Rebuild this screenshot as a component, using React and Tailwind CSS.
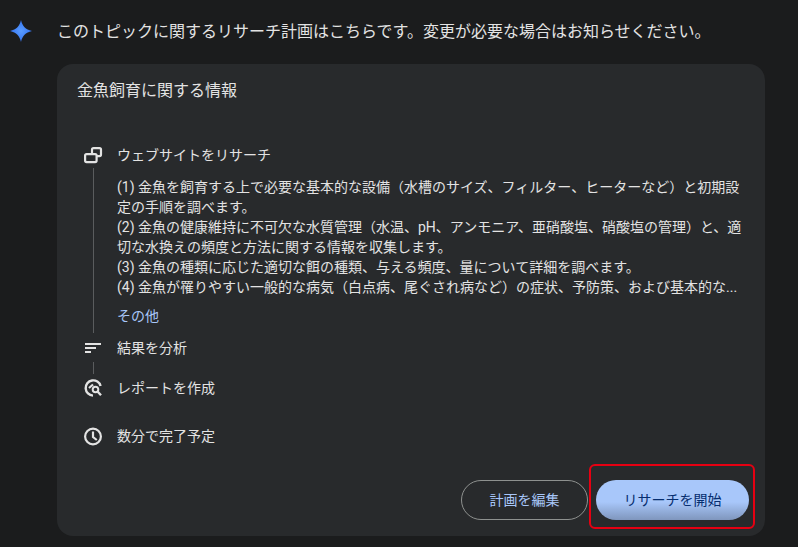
const font = { fontFamily: '"Roboto", "Noto Sans CJK JP", sans-serif' };

function Spark() {
  return (
    <svg width="24" height="24" viewBox="0 1 24 24" className="shrink-0">
      <defs>
        <radialGradient id="sp" cx="0.5" cy="0.5" r="0.55">
          <stop offset="0" stopColor="#5a9cff" />
          <stop offset="1" stopColor="#2f6ff0" />
        </radialGradient>
      </defs>
      <path d="M12 1C13.4 7.2 16.4 10.4 23 12C16.4 13.6 13.4 16.8 12 23C10.6 16.8 7.6 13.6 1 12C7.6 10.4 10.6 7.2 12 1Z" fill="url(#sp)" />
    </svg>
  );
}

function IconWeb() {
  return (
    <svg width="20" height="20" viewBox="0 0 20 20" fill="none" stroke="#e3e3e3" strokeWidth="2.2">
      <rect x="8" y="3.1" width="9" height="8" rx="1.5" />
      <rect x="1.1" y="9.1" width="11.5" height="8" rx="1.5" fill="#282a2c" />
    </svg>
  );
}

function IconAnalyze() {
  return (
    <svg width="20" height="20" viewBox="0 0 20 20" fill="#e3e3e3">
      <rect x="1" y="5" width="16" height="2" />
      <rect x="1" y="9" width="11" height="2" />
      <rect x="1" y="13" width="6" height="2" />
    </svg>
  );
}

function IconReport() {
  return (
    <svg width="20" height="20" viewBox="0 0 20 20" fill="none">
      <path d="M9 17.6A7.6 7.6 0 1 1 16.6 8" stroke="#e3e3e3" strokeWidth="2.4" />
      <path d="M5 10L9 6.5" stroke="#e3e3e3" strokeWidth="2.2" />
      <circle cx="11.5" cy="11.5" r="2.8" stroke="#e3e3e3" strokeWidth="2" />
      <path d="M13.5 13.5L17 17.2" stroke="#e3e3e3" strokeWidth="2.4" />
    </svg>
  );
}

function IconClock() {
  return (
    <svg width="20" height="20" viewBox="0 0 20 20" fill="none" stroke="#e3e3e3" strokeWidth="2.2">
      <circle cx="9" cy="10.5" r="7.9" />
      <path d="M9 5.5V11L12.8 14" />
    </svg>
  );
}

function Step({ icon, label }) {
  return (
    <div className="flex items-center h-5">
      <div className="w-[33px] flex justify-start shrink-0">{icon}</div>
      <span className="text-[14px] leading-5 text-[#e3e3e3]">{label}</span>
    </div>
  );
}

export default function App() {
  return (
    <div style={font} className="w-[798px] h-[547px] overflow-hidden bg-[#1b1c1d] text-[#e3e3e3] pl-[9px] pr-[33px] pt-[20px]">
      <div className="flex items-center h-6 gap-[24px]">
        <Spark />
        <p className="text-[16px] leading-6 text-[#e3e3e3] whitespace-nowrap">このトピックに関するリサーチ計画はこちらです。変更が必要な場合はお知らせください。</p>
      </div>

      <div className="ml-[48px] mt-[20px] h-[472px] rounded-[16px] bg-[#282a2c] flex flex-col pt-[15px] pl-[20px] pr-[16px]">
        <h2 className="text-[16px] leading-6 font-normal text-[#e3e3e3]">金魚飼育に関する情報</h2>

        <div className="mt-[42px] pl-[7px]">
          <Step icon={<IconWeb />} label="ウェブサイトをリサーチ" />
          <div className="flex mt-[3px]">
            <div className="w-[33px] shrink-0 pl-[9px]">
              <div className="w-px h-[165px] bg-[#5a5c5e]" />
            </div>
            <div className="pt-[9px] text-[14px] leading-5 text-[#e3e3e3] w-[630px]">
              <p>(1) 金魚を飼育する上で必要な基本的な設備（水槽のサイズ、フィルター、ヒーターなど）と初期設定の手順を調べます。</p>
              <p>(2) 金魚の健康維持に不可欠な水質管理（水温、pH、アンモニア、亜硝酸塩、硝酸塩の管理）と、適切な水換えの頻度と方法に関する情報を収集します。</p>
              <p>(3) 金魚の種類に応じた適切な餌の種類、与える頻度、量について詳細を調べます。</p>
              <p className="whitespace-nowrap">(4) 金魚が罹りやすい一般的な病気（白点病、尾ぐされ病など）の症状、予防策、および基本的な...</p>
              <p className="mt-[9px] text-[#a8c7fa]">その他</p>
            </div>
          </div>
          <div className="mt-[5px]">
            <Step icon={<IconAnalyze />} label="結果を分析" />
          </div>
          <div className="pl-[9px] mt-[4px]">
            <div className="w-px h-[12px] bg-[#5a5c5e]" />
          </div>
          <div className="mt-[4px]">
            <Step icon={<IconReport />} label="レポートを作成" />
          </div>
          <div className="mt-[28px]">
            <Step icon={<IconClock />} label="数分で完了予定" />
          </div>
        </div>

        <div className="flex justify-end mt-[34px] gap-2">
          <button className="w-[127px] h-10 rounded-full border border-[#8e918f] text-[14px] text-[#a8c7fa] bg-transparent">計画を編集</button>
          <button className="w-[153px] h-10 rounded-full text-[14px] text-[#062e6f] bg-gradient-to-b from-[#a8c7fa] from-55% to-[#7f96bd] relative">
            リサーチを開始
            <span className="absolute left-[-7px] top-[-16px] w-[166px] h-[65px] rounded-[6px] border-2 border-[#e60012] pointer-events-none" />
          </button>
        </div>
      </div>
    </div>
  );
}
